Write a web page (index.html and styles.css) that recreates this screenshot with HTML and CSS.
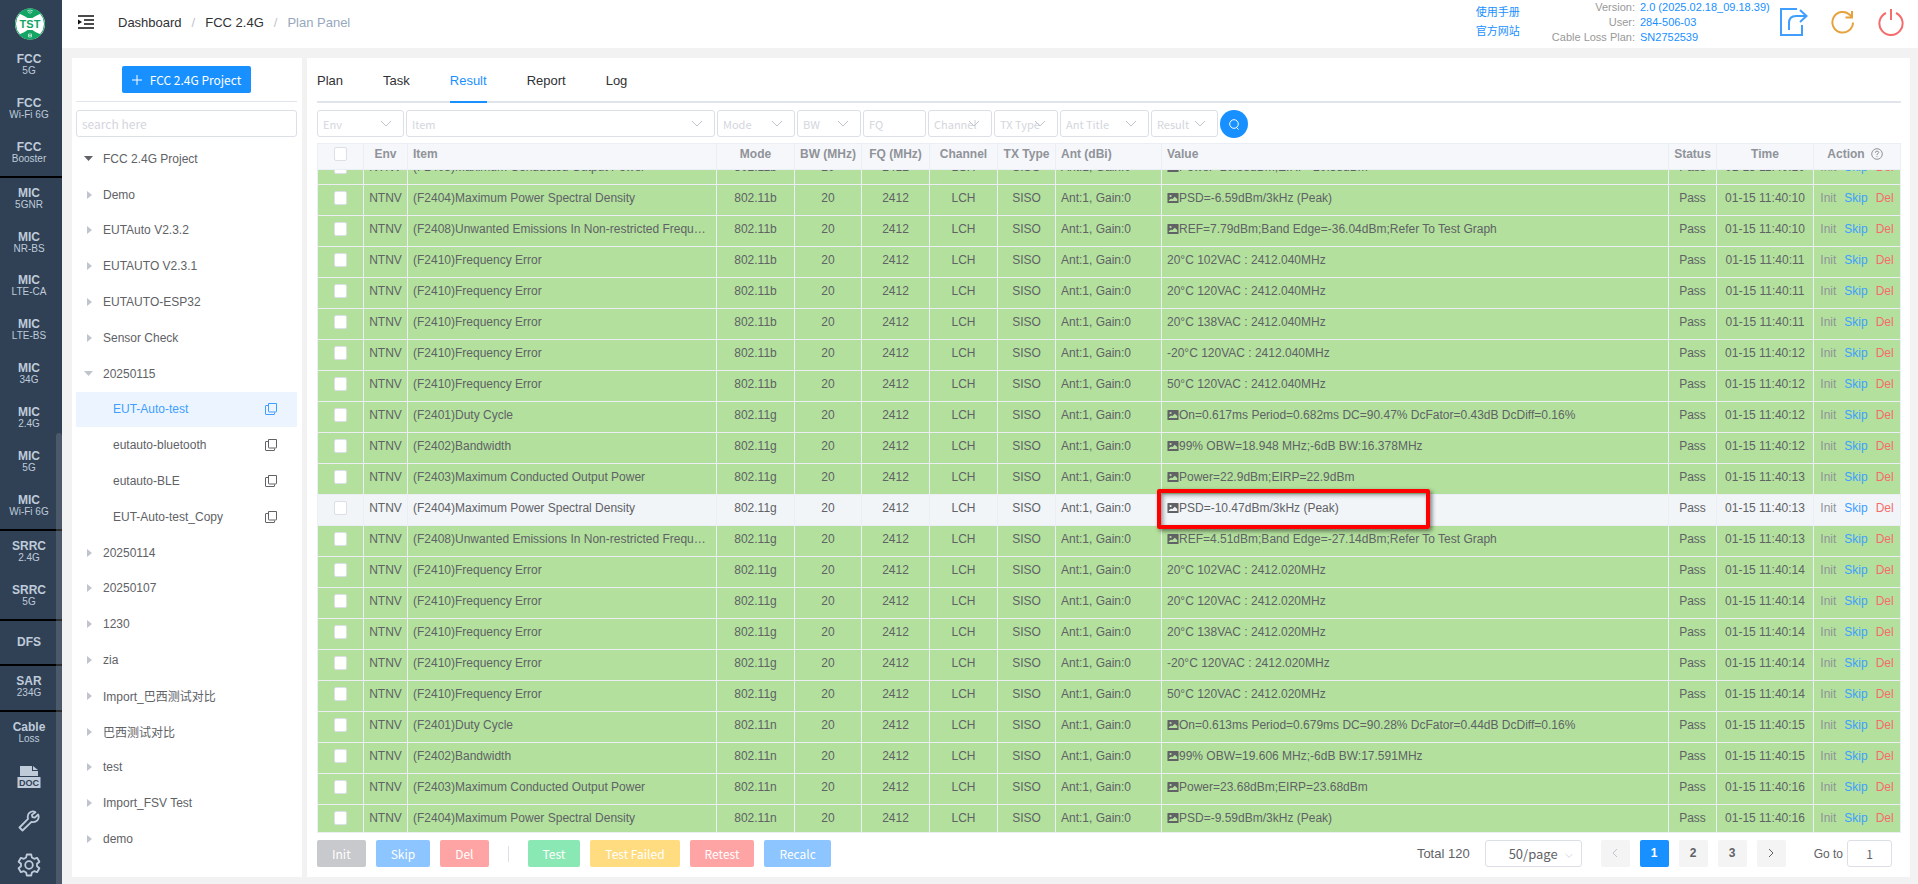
FILE: index.html
```
<!DOCTYPE html>
<html lang="en">
<head>
<meta charset="utf-8">
<title>FCC 2.4G - Plan Panel</title>
<link rel="stylesheet" href="styles.css">
</head>
<body>
<svg class="sprite" aria-hidden="true">
  <symbol id="chevron" viewBox="0 0 12 8"><path d="M1 1l5 5 5-5" fill="none" stroke="currentColor"/></symbol>
  <symbol id="copy" viewBox="0 0 12 12"><path d="M3.5.5h8v8q0 .5-.5.5H4q-.5 0-.5-.5zM3 2.500H1q-.5 0-.5.5v8q0 .5.5.5h8q.5 0 .5-.5V9.500" fill="none" stroke="currentColor"/></symbol>
  <symbol id="picture" viewBox="0 0 10 9"><path fill-rule="evenodd" d="M.5 0h9q.5 0 .5.5v8q0 .5-.5.5h-9Q0 9 0 8.500v-8Q0 0 .5 0zM2.800 1.700a1 1 0 1 0 0 2 1 1 0 0 0 0-2zM1.300 7.300h7.500V5.500L6.600 3.300 4.300 5.700l-1-.8-2 1.600z" fill="currentColor"/></symbol>
</svg>
<div class="app">
  <aside class="sidebar">
    <a class="logo" href="#" aria-label="TST">
      <svg width="30" height="32" viewBox="0 0 30 32">
        <ellipse cx="15" cy="16" rx="15" ry="15.500" fill="#fff"/>
        <path d="M4 5.500A15 15.500 0 0 1 26 5.500Q20 8 17.500 10h-5Q10 8 4 5.500zM4 26.500A15 15.500 0 0 0 26 26.500Q20 24 17.500 22h-5Q10 24 4 26.500z" fill="#13a564"/>
        <ellipse cx="15" cy="16" rx="14.500" ry="15" fill="none" stroke="#13a564"/>
        <path d="M12 3q3-2 6 0M13 4.500q2-1.500 4 0M14.500 5.500h1M13.500 26h3v3h-3zM13.500 27.500h3" fill="none" stroke="#c9ecd9" stroke-width=".8"/>
        <text x="15" y="20" text-anchor="middle" class="logo-text">TST</text>
      </svg>
    </a>
    <ul class="nav">
      <li><a href="#"><b>FCC</b><span>5G</span></a></li>
      <li><a href="#"><b>FCC</b><span>Wi-Fi 6G</span></a></li>
      <li class="group-end"><a href="#"><b>FCC</b><span>Booster</span></a></li>
      <li><a href="#"><b>MIC</b><span>5GNR</span></a></li>
      <li><a href="#"><b>MIC</b><span>NR-BS</span></a></li>
      <li><a href="#"><b>MIC</b><span>LTE-CA</span></a></li>
      <li><a href="#"><b>MIC</b><span>LTE-BS</span></a></li>
      <li><a href="#"><b>MIC</b><span>34G</span></a></li>
      <li><a href="#"><b>MIC</b><span>2.4G</span></a></li>
      <li><a href="#"><b>MIC</b><span>5G</span></a></li>
      <li class="group-end"><a href="#"><b>MIC</b><span>Wi-Fi 6G</span></a></li>
      <li><a href="#"><b>SRRC</b><span>2.4G</span></a></li>
      <li class="group-end"><a href="#"><b>SRRC</b><span>5G</span></a></li>
      <li class="group-end"><a href="#"><b>DFS</b></a></li>
      <li class="group-end"><a href="#"><b>SAR</b><span>234G</span></a></li>
      <li><a href="#"><b>Cable</b><span>Loss</span></a></li>
      <li><a href="#" aria-label="Documents">
        <svg width="24" height="22" viewBox="0 0 24 22"><path d="M3 0h12v5h6v5H3zM16 0l5 4h-5zM.5 11h23v11H.5z" fill="#bfcbd9"/><text x="12" y="19.500" text-anchor="middle" class="doc-text">DOC</text></svg></a></li>
      <li><a href="#" aria-label="Tools">
        <svg width="22" height="22" viewBox="0 0 22 22" fill="none" stroke="#bfcbd9" stroke-width="1.800" stroke-linejoin="round"><path d="M17.500 2.200Q14.500.3 11.500 2.700 9 5 10 8.800L1.500 17.500l3 3 9-8.700q3.500.9 5.800-1.500 2.300-2.600.8-5.800l-3.300 3.200-2.300-.5-.6-2.300z"/></svg></a></li>
      <li><a href="#" aria-label="Settings">
        <svg width="24" height="24" viewBox="0 0 24 24" fill="none" stroke="#bfcbd9" stroke-width="1.800" stroke-linejoin="round"><path d="M9.800 1.500h4.400l.7 3 2.200 1.300 3-1 2.300 3.900-2.400 2.100v2.400l2.400 2.100-2.300 3.900-3-1-2.200 1.300-.7 3H9.800l-.7-3-2.200-1.300-3 1-2.300-3.900L4 13.200v-2.400L1.600 8.700l2.300-3.900 3 1 2.200-1.300z"/><circle cx="12" cy="12" r="3.800"/></svg></a></li>
    </ul>
    <div class="side-scroll"></div>
  </aside>

  <div class="main">
    <header class="topbar">
      <button class="icon-btn fold" aria-label="Toggle menu"><svg width="16" height="14" viewBox="0 0 16 14"><path d="M0 1h16M6 5h10M6 9h10M0 13h16" stroke="#111" stroke-width="1.300"/><path d="M0 4.500L4 7 0 9.500z" fill="#111"/></svg></button>
      <nav class="crumbs"><a href="#">Dashboard</a><i>/</i><a href="#">FCC 2.4G</a><i>/</i><span>Plan Panel</span></nav>
      <div class="links"><a href="#">使用手册</a><a href="#">官方网站</a></div>
      <dl class="info">
        <dt>Version:</dt><dd>2.0 (2025.02.18_09.18.39)</dd>
        <dt>User:</dt><dd>284-506-03</dd>
        <dt>Cable Loss Plan:</dt><dd>SN2752539</dd>
      </dl>
      <div class="tools">
        <button class="icon-btn" aria-label="Share"><svg width="28" height="30" viewBox="0 0 28 30" fill="none" stroke="#409eff" stroke-width="2"><path d="M17 2H1v26h21V18"/><path d="M9 23v-7q0-7 7-7h10M20 3l6.500 6-6.500 6"/></svg></button>
        <button class="icon-btn" aria-label="Refresh"><svg width="24" height="24" viewBox="0 0 24 24" fill="none" stroke="#e6a23c" stroke-width="2"><path d="M22 12.500A10.300 10.300 0 1 1 19 5l1.500 1.500M21 1v6.500h-6.500"/></svg></button>
        <button class="icon-btn" aria-label="Log out"><svg width="26" height="28" viewBox="0 0 26 28" fill="none" stroke="#f56c6c" stroke-width="2"><path d="M8 5A11.600 11.600 0 1 0 18 5M13 1v11"/></svg></button>
      </div>
    </header>

    <div class="content">
      <section class="panel projects">
        <div class="new-row"><button class="new-btn"><svg width="10" height="10" viewBox="0 0 10 10"><path d="M5 0v10M0 5h10" stroke="#fff"/></svg>FCC 2.4G Project</button></div>
        <input class="search" type="text" placeholder="search here" aria-label="Search projects">
        <ul class="tree" id="tree"></ul>
      </section>

      <section class="panel results">
        <nav class="tabs"><a href="#">Plan</a><a href="#">Task</a><a class="active" href="#">Result</a><a href="#">Report</a><a href="#">Log</a></nav>
        <form class="filters" id="filters"></form>
        <div class="grid">
          <table class="head">
            <colgroup class="cols"></colgroup>
            <thead><tr><th><input type="checkbox" aria-label="Select all"></th><th>Env</th><th class="left">Item</th><th>Mode</th><th>BW (MHz)</th><th>FQ (MHz)</th><th>Channel</th><th>TX Type</th><th class="left">Ant (dBi)</th><th class="left">Value</th><th>Status</th><th>Time</th><th><span class="action-head">Action <svg width="12" height="12" viewBox="0 0 12 12" fill="none" stroke="#909399"><circle cx="6" cy="6" r="5.300"/><path d="M4.300 4.800q0-1.700 1.700-1.700t1.700 1.400q0 .8-1.700 1.700v1M6 8.200v1"/></svg></span></th></tr></thead>
          </table>
          <div class="scroll">
            <table class="body">
              <colgroup class="cols"></colgroup>
              <tbody id="rows"></tbody>
            </table>
          </div>
        </div>
        <footer class="footer">
          <button class="btn grey">Init</button>
          <button class="btn blue">Skip</button>
          <button class="btn red">Del</button>
          <span class="divider"></span>
          <button class="btn green">Test</button>
          <button class="btn yellow">Test Failed</button>
          <button class="btn red">Retest</button>
          <button class="btn blue">Recalc</button>
          <div class="pager">
            <span class="total">Total 120</span>
            <label class="field size"><select aria-label="Page size"><option>50/page</option></select><svg width="8" height="6"><use href="#chevron"/></svg></label>
            <button class="page" disabled aria-label="Previous"><svg width="6" height="10" viewBox="0 0 6 10"><path d="M5 1L1 5l4 4" fill="none" stroke="#c0c4cc"/></svg></button>
            <button class="page current">1</button>
            <button class="page">2</button>
            <button class="page">3</button>
            <button class="page" aria-label="Next"><svg width="6" height="10" viewBox="0 0 6 10"><path d="M1 1l4 4-4 4" fill="none" stroke="#606266"/></svg></button>
            <label class="goto">Go to <input type="text" value="1"></label>
          </div>
        </footer>
      </section>
    </div>
  </div>
</div>
<script src="app.js"></script>
</body>
</html>
```
FILE: styles.css
```
* { box-sizing: border-box; }
body {
  margin: 0;
  font-family: "Liberation Sans", "Noto Sans CJK SC", sans-serif;
  font-size: 12px;
  color: #606266;
}
a { color: inherit; text-decoration: none; }
ul, dl, dd { margin: 0; padding: 0; list-style: none; }
button, input, select { font: inherit; color: inherit; margin: 0; }
svg { display: block; flex: none; }
.sprite { position: absolute; width: 0; height: 0; }
.app { display: flex; height: 100vh; overflow: hidden; background: #f2f2f2; }

.sidebar {
  position: relative;
  display: flex;
  flex-direction: column;
  flex: none;
  width: 62px;
  background: #304156;
  color: #bfcbd9;
}
.logo { display: flex; align-items: center; justify-content: center; flex: none; height: 44px; padding: 4px 2px 0 0; }
.logo-text { font-size: 11px; font-weight: bold; fill: #13a564; }
.doc-text { font-size: 9px; font-weight: bold; fill: #304156; }
.nav { display: flex; flex-direction: column; flex: 1; margin-bottom: -4px; }
.nav li { flex: 1 1 0; min-height: 0; }
.nav .group-end { border-bottom: 2px solid #000; }
.nav a {
  display: flex;
  flex-direction: column;
  align-items: center;
  justify-content: center;
  height: 100%;
  padding: 0 4px 2px 0;
  line-height: 12px;
}
.nav b { font-size: 12px; }
.nav span { font-size: 10px; }
.side-scroll {
  position: absolute;
  right: 0;
  bottom: 0;
  width: 6px;
  height: 51%;
  border-radius: 3px 3px 0 0;
  background: rgba(144, 147, 153, .3);
}

.main { display: flex; flex-direction: column; flex: 1; min-width: 0; }
.topbar { display: flex; align-items: center; flex: none; height: 48px; padding: 0 14px 4px 16px; background: #fff; }
.icon-btn { display: flex; padding: 0; border: 0; background: none; }
.crumbs { display: flex; gap: 10px; margin-left: 24px; font-size: 13px; color: #97a8be; }
.crumbs a { color: #303133; }
.crumbs i { font-style: normal; color: #c0c4cc; }
.links { display: flex; flex-direction: column; margin-left: auto; font-size: 11px; line-height: 19px; color: #1890ff; }
.info { display: grid; grid-template-columns: auto 126px; column-gap: 5px; margin-left: 32px; font-size: 11px; line-height: 15px; }
.info dt { text-align: right; color: #999; }
.info dd { color: #1890ff; white-space: nowrap; }
.tools { display: flex; align-items: center; gap: 23px; margin-left: 14px; }

.content { display: flex; gap: 5px; flex: 1; min-height: 0; padding: 10px 8px 7px 10px; }
.panel { display: flex; flex-direction: column; background: #fff; }
.projects { flex: none; width: 230px; padding: 8px 5px 20px 4px; }
.new-row { display: flex; justify-content: center; padding-bottom: 8px; border-bottom: 1px solid #dfe4ed; }
.new-btn {
  display: flex;
  align-items: center;
  gap: 8px;
  height: 27px;
  padding: 0 10px;
  border: 0;
  border-radius: 2px;
  background: #1890ff;
  color: #fff;
  font-family: "Noto Sans CJK SC", sans-serif;
  font-size: 12px;
}
.search, .field, .goto input {
  height: 27px;
  border: 1px solid #dcdfe6;
  border-radius: 3px;
  background: #fff;
  font-family: "Noto Sans CJK SC", sans-serif;
}
.search { width: 100%; margin: 8px 0 4px; padding: 0 5px; }
.search::placeholder, .field input::placeholder { color: #d3d6dd; opacity: 1; }
.tree { display: grid; grid-auto-rows: 1fr; flex: 1; min-height: 0; }
.tree a { display: flex; align-items: center; height: 100%; padding: 0 20px 0 8px; }
.tree .caret { flex: none; width: 19px; height: 8px; color: #c0c4cc; }
.tree .caret.dark { color: #606266; }
.tree .leaf { padding-left: 37px; }
.tree .leaf svg { margin-left: auto; }
.tree .selected { background: #ecf5ff; color: #409eff; }

.results { flex: 1; min-width: 0; padding: 0 9px 10px 10px; }
.tabs { display: flex; gap: 40px; flex: none; border-bottom: 2px solid #dfe4ed; font-size: 13px; color: #303133; }
.tabs a { margin-bottom: -2px; padding-top: 13px; line-height: 20px; height: 45px; }
.tabs .active { color: #1890ff; border-bottom: 2px solid #1890ff; }
.filters { display: flex; gap: 2px; flex: none; height: 27px; margin: 7px 0 6px; }
.field { position: relative; display: block; flex: none; font-size: 11px; color: #d3d6dd; }
.field select, .field input {
  appearance: none;
  width: 100%;
  height: 100%;
  padding: 0 5px;
  border: 0;
  background: none;
  outline: 0;
}
.field svg { position: absolute; right: 11px; top: 9px; color: #c0c4cc; pointer-events: none; }
.w-env { width: 87px; }
.w-item { width: 309px; }
.w-mode { width: 78px; }
.w-narrow { width: 64px; }
.w-text { width: 63px; }
.w-ant { width: 89px; }
.w-result { width: 67px; }
.find {
  display: flex;
  align-items: center;
  justify-content: center;
  width: 28px;
  height: 28px;
  padding: 0;
  border: 0;
  border-radius: 50%;
  background: #1890ff;
}

.grid { display: flex; flex-direction: column; flex: 1; min-height: 0; border: solid #ebeef5; border-width: 1px 0 1px 1px; }
.grid table { width: 100%; table-layout: fixed; border-collapse: separate; border-spacing: 0; }
.scroll { flex: 1; min-height: 0; overflow: hidden; }
.body { margin-top: -16px; }
.grid th, .grid td {
  padding: 0 5px 5px;
  border: solid #ebeef5;
  border-width: 0 1px 1px 0;
  text-align: center;
  white-space: nowrap;
}
.grid th { height: 26px; background: #f5f7fa; color: #909399; }
.grid td { height: 31px; background: #b3e19d; }
.grid .left { text-align: left; }
.ellipsis { overflow: hidden; text-overflow: ellipsis; }
.grid .hover td { background: #f2f5f8; }
.grid input {
  display: block;
  appearance: none;
  width: 13px;
  height: 14px;
  margin: 0 auto;
  border: 1px solid #dcdfe6;
  border-radius: 2px;
  background: #fff;
}
.action-head { display: flex; align-items: center; justify-content: center; gap: 6px; padding-right: 4px; }
.value { display: flex; align-items: center; }
.actions { display: flex; justify-content: center; gap: 8px; }
.actions .init { color: #909399; }
.actions .skip { color: #409eff; }
.actions .del { color: #f56c6c; }
.marked { position: relative; }
.marker {
  position: absolute;
  left: -5px;
  top: -6px;
  width: 273px;
  height: 40px;
  border: 4px solid #f00;
  border-radius: 2px;
  box-shadow: 2px 2px 4px rgba(0, 0, 0, .5), inset 2px 2px 4px rgba(0, 0, 0, .4);
}

.footer { display: flex; align-items: center; gap: 10px; flex: none; margin-top: 7px; }
.btn {
  height: 27px;
  padding: 0 15px;
  border: 0;
  border-radius: 2px;
  color: #fff;
  font-family: "Noto Sans CJK SC", sans-serif;
  font-size: 12px;
}
.grey { background: #c8c9cc; }
.blue { background: #8cc5ff; }
.red { background: #ffa4a4; }
.green { background: #8ae8b4; }
.yellow { background: #ffdc80; }
.divider { width: 1px; height: 16px; margin: 0 9px; background: #dcdfe6; }
.pager { display: flex; align-items: center; gap: 10px; margin: 0 9px 0 auto; }
.total { margin-right: 5px; font-size: 13px; }
.size { width: 97px; margin-right: 9px; font-size: 13px; color: #606266; }
.size select { padding-left: 23px; }
.size svg { right: 8px; top: 12px; }
.page {
  display: flex;
  align-items: center;
  justify-content: center;
  width: 29px;
  height: 27px;
  padding: 0 0 2px;
  border: 0;
  border-radius: 2px;
  background: #f4f4f5;
  font-weight: bold;
}
.current { background: #1890ff; color: #fff; }
.goto { display: flex; align-items: center; gap: 4px; margin-left: 18px; }
.goto input { width: 45px; text-align: center; }
```
FILE: app.js
```
const widths = [46, 44, 309, 78, 67, 68, 68, 58, 106, 0, 48, 97, 87];
document.querySelectorAll('.cols').forEach(group => {
  group.innerHTML = widths.map(w => w ? `<col style="width:${w}px">` : '<col>').join('');
});

const tree = [
  ['FCC 2.4G Project', 'open dark'], ['Demo'], ['EUTAuto V2.3.2'], ['EUTAUTO V2.3.1'], ['EUTAUTO-ESP32'],
  ['Sensor Check'], ['20250115', 'open'], ['EUT-Auto-test', 'leaf selected'], ['eutauto-bluetooth', 'leaf'],
  ['eutauto-BLE', 'leaf'], ['EUT-Auto-test_Copy', 'leaf'], ['20250114'], ['20250107'], ['1230'], ['zia'],
  ['Import_巴西测试对比'], ['巴西测试对比'], ['test'], ['Import_FSV Test'], ['demo']
];
document.getElementById('tree').innerHTML = tree.map(([name, kind = '']) => {
  if (kind.startsWith('leaf')) {
    return `<li><a href="#" class="${kind}">${name}<svg width="12" height="12"><use href="#copy"/></svg></a></li>`;
  }
  const open = kind.startsWith('open');
  const shape = open ? 'M0 1h9L4.500 6z' : 'M3 0l5 4-5 4z';
  return `<li><a href="#"><svg class="caret ${kind}" viewBox="0 0 19 8"><path d="${shape}" fill="currentColor"/></svg>${name}</a></li>`;
}).join('');

const filters = [
  ['Env', 'w-env'], ['Item', 'w-item'], ['Mode', 'w-mode'], ['BW', 'w-narrow'], ['FQ', 'w-text', true],
  ['Channel', 'w-narrow'], ['TX Type', 'w-narrow'], ['Ant Title', 'w-ant'], ['Result', 'w-result']
];
document.getElementById('filters').innerHTML = filters.map(([name, width, text]) => text
  ? `<label class="field ${width}"><input type="text" placeholder="${name}" aria-label="${name}"></label>`
  : `<label class="field ${width}"><select aria-label="${name}"><option>${name}</option></select><svg width="12" height="8"><use href="#chevron"/></svg></label>`
).join('') + '<button class="find" type="button" aria-label="Search"><svg width="10" height="11" viewBox="0 0 10 11" fill="none" stroke="#fff"><circle cx="5" cy="5" r="4.300"/><path d="M7.500 8.500L9.500 10.500"/></svg></button>';

const items = {
  2401: 'Duty Cycle', 2402: 'Bandwidth', 2403: 'Maximum Conducted Output Power', 2404: 'Maximum Power Spectral Density',
  2408: 'Unwanted Emissions In Non-restricted Frequency Bands', 2410: 'Frequency Error'
};
const rows = [
  [2403, 'b', 'Power=20.58dBm;EIRP=20.58dBm', 10],
  [2404, 'b', 'PSD=-6.59dBm/3kHz (Peak)', 10],
  [2408, 'b', 'REF=7.79dBm;Band Edge=-36.04dBm;Refer To Test Graph', 10],
  [2410, 'b', '20°C 102VAC : 2412.040MHz', 11],
  [2410, 'b', '20°C 120VAC : 2412.040MHz', 11],
  [2410, 'b', '20°C 138VAC : 2412.040MHz', 11],
  [2410, 'b', '-20°C 120VAC : 2412.040MHz', 12],
  [2410, 'b', '50°C 120VAC : 2412.040MHz', 12],
  [2401, 'g', 'On=0.617ms Period=0.682ms DC=90.47% DcFator=0.43dB DcDiff=0.16%', 12],
  [2402, 'g', '99% OBW=18.948 MHz;-6dB BW:16.378MHz', 12],
  [2403, 'g', 'Power=22.9dBm;EIRP=22.9dBm', 13],
  [2404, 'g', 'PSD=-10.47dBm/3kHz (Peak)', 13, true],
  [2408, 'g', 'REF=4.51dBm;Band Edge=-27.14dBm;Refer To Test Graph', 13],
  [2410, 'g', '20°C 102VAC : 2412.020MHz', 14],
  [2410, 'g', '20°C 120VAC : 2412.020MHz', 14],
  [2410, 'g', '20°C 138VAC : 2412.020MHz', 14],
  [2410, 'g', '-20°C 120VAC : 2412.020MHz', 14],
  [2410, 'g', '50°C 120VAC : 2412.020MHz', 14],
  [2401, 'n', 'On=0.613ms Period=0.679ms DC=90.28% DcFator=0.44dB DcDiff=0.16%', 15],
  [2402, 'n', '99% OBW=19.606 MHz;-6dB BW:17.591MHz', 15],
  [2403, 'n', 'Power=23.68dBm;EIRP=23.68dBm', 16],
  [2404, 'n', 'PSD=-9.59dBm/3kHz (Peak)', 16]
];
document.getElementById('rows').innerHTML = rows.map(([code, mode, value, sec, hover]) => {
  const icon = code === 2410 ? '' : '<svg width="12" height="10"><use href="#picture"/></svg>';
  return `<tr class="${hover ? 'hover' : ''}"><td><input type="checkbox" aria-label="Select row"></td><td>NTNV</td>
    <td class="left ellipsis">(F${code})${items[code]}</td><td>802.11${mode}</td><td>20</td><td>2412</td><td>LCH</td><td>SISO</td>
    <td class="left">Ant:1, Gain:0</td><td class="left ${hover ? 'marked' : ''}"><span class="value">${icon}${value}</span>${hover ? '<span class="marker"></span>' : ''}</td>
    <td>Pass</td><td>01-15 11:40:${sec}</td>
    <td><span class="actions"><a class="init" href="#">Init</a><a class="skip" href="#">Skip</a><a class="del" href="#">Del</a></span></td></tr>`;
}).join('');
```
